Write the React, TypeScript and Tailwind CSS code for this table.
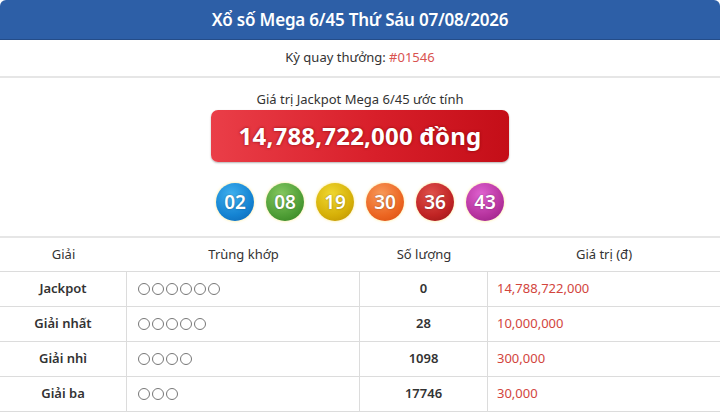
// Kết quả xổ số Mega 6/45
const balls = [
  { n: "02", cls: "bg-[radial-gradient(circle_at_40%_30%,#3fb0ee,#1583d2_60%,#0b64b0)]" },
  { n: "08", cls: "bg-[radial-gradient(circle_at_40%_30%,#86c860,#4f9e36_60%,#2f7d1c)]" },
  { n: "19", cls: "bg-[radial-gradient(circle_at_40%_30%,#f0d830,#d6b008_60%,#b98d00)]" },
  { n: "30", cls: "bg-[radial-gradient(circle_at_40%_30%,#f89a5a,#ec6622_60%,#d84a0c)]" },
  { n: "36", cls: "bg-[radial-gradient(circle_at_40%_30%,#e0524c,#c02424_60%,#941414)]" },
  { n: "43", cls: "bg-[radial-gradient(circle_at_40%_30%,#df62d0,#b7349f_60%,#931e80)]" },
];

const prizes = [
  { name: "Jackpot", match: 6, count: "0", value: "14,788,722,000" },
  { name: "Giải nhất", match: 5, count: "28", value: "10,000,000" },
  { name: "Giải nhì", match: 4, count: "1098", value: "300,000" },
  { name: "Giải ba", match: 3, count: "17746", value: "30,000" },
];

const Circles = ({ count }: { count: number }) => (
  <div className="flex gap-[2px]">
    {Array.from({ length: count }).map((_, i) => (
      <span
        key={i}
        className="block w-[12px] h-[12px] rounded-full border-[1.5px] border-[#777]"
      />
    ))}
  </div>
);

export default function App() {
  return (
    <div
      className="w-[720px] h-[414px] overflow-hidden bg-white text-[#333]"
      style={{ fontFamily: '"Noto Sans", "Open Sans", sans-serif' }}
    >
      {/* Tiêu đề */}
      <div className="h-[40px] bg-[#2d5fa7] rounded-t-[6px] border-b border-[#244c88] flex items-center justify-center">
        <h1 className="text-white text-[17px] font-semibold tracking-[-0.2px] pt-[1px]">
          Xổ số Mega 6/45 Thứ Sáu 07/08/2026
        </h1>
      </div>

      <div className="h-[38px] flex items-center justify-center text-[13px] border-b-2 border-[#e6e6e6]">
        Kỳ quay thưởng:&nbsp;<span className="text-[#d9534f]">#01546</span>
      </div>

      {/* Jackpot */}
      <div className="flex flex-col items-center pt-[12px]">
        <div className="text-[13px] leading-[18px]">Giá trị Jackpot Mega 6/45 ước tính</div>
        <div className="mt-[2px] w-[298px] h-[52px] rounded-[7px] bg-[linear-gradient(90deg,#ea3e48,#d81f2a_55%,#c40e18)] shadow-[0_1px_2px_rgba(0,0,0,0.3)] flex items-center justify-center">
          <span className="text-white text-[24px] font-bold tracking-[0.2px] [text-shadow:0_0_3px_rgba(120,0,0,0.8)]">
            14,788,722,000 đồng
          </span>
        </div>
        <div className="mt-[21px] flex gap-[12px]">
          {balls.map((b) => (
            <div
              key={b.n}
              className={`w-[38px] h-[38px] rounded-full flex items-center justify-center shadow-[0_0_3px_rgba(255,230,120,0.9)] ${b.cls}`}
            >
              <span className="text-white text-[19px] font-semibold [text-shadow:0_0_2px_rgba(0,0,0,0.35)]">
                {b.n}
              </span>
            </div>
          ))}
        </div>
      </div>

      {/* Bảng giải thưởng */}
      <div className="mt-[15px] border-t-2 border-[#e6e6e6] text-[13px]">
        <div className="grid grid-cols-[127px_233px_128px_232px] h-[34px] items-center text-center border-b border-[#dcdcdc]">
          <div>Giải</div>
          <div>Trùng khớp</div>
          <div>Số lượng</div>
          <div>Giá trị (đ)</div>
        </div>
        {prizes.map((p) => (
          <div
            key={p.name}
            className="grid grid-cols-[127px_233px_128px_232px] h-[35px] border-b border-[#dcdcdc]"
          >
            <div className="flex items-center justify-center font-semibold border-r border-[#dcdcdc]">
              {p.name}
            </div>
            <div className="flex items-center pl-[11px] border-r border-[#dcdcdc]">
              <Circles count={p.match} />
            </div>
            <div className="flex items-center justify-center font-semibold border-r border-[#dcdcdc]">
              {p.count}
            </div>
            <div className="flex items-center pl-[9px] text-[#d2453d]">{p.value}</div>
          </div>
        ))}
      </div>
    </div>
  );
}
